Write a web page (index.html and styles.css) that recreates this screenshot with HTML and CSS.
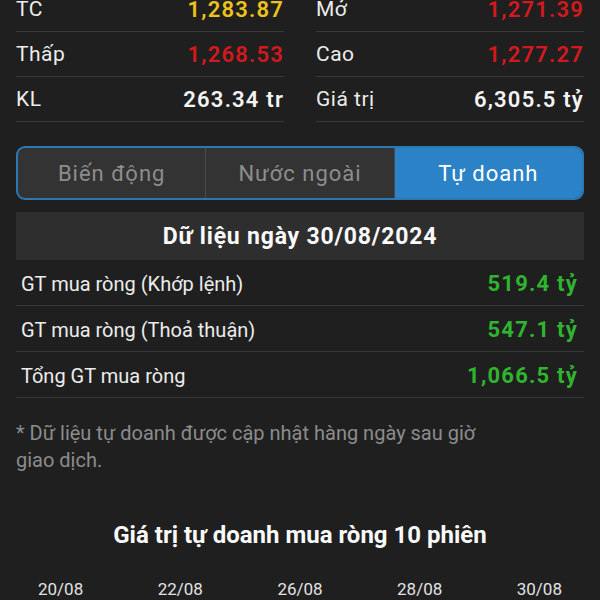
FILE: index.html
```html
<!DOCTYPE html>
<html lang="vi">
<head>
<meta charset="UTF-8">
<meta name="viewport" content="width=device-width, initial-scale=1.0">
<title>Tự doanh</title>
<link rel="stylesheet" href="styles.css">
</head>
<body>
<main class="page">
  <section class="summary">
    <div class="col">
      <div class="stat"><span>TC</span><b class="ref">1,283.87</b></div>
      <div class="stat"><span>Thấp</span><b class="down">1,268.53</b></div>
      <div class="stat"><span>KL</span><b class="plain">263.34 tr</b></div>
    </div>
    <div class="col">
      <div class="stat"><span>Mở</span><b class="down">1,271.39</b></div>
      <div class="stat"><span>Cao</span><b class="down">1,277.27</b></div>
      <div class="stat"><span>Giá trị</span><b class="plain">6,305.5 tỷ</b></div>
    </div>
  </section>

  <nav class="tabs">
    <div class="tab">Biến động</div>
    <div class="tab">Nước ngoài</div>
    <div class="tab active">Tự doanh</div>
  </nav>

  <div class="day">Dữ liệu ngày 30/08/2024</div>

  <section class="net">
    <div class="row"><span>GT mua ròng (Khớp lệnh)</span><b>519.4 tỷ</b></div>
    <div class="row"><span>GT mua ròng (Thoả thuận)</span><b>547.1 tỷ</b></div>
    <div class="row"><span>Tổng GT mua ròng</span><b>1,066.5 tỷ</b></div>
  </section>

  <p class="note">* Dữ liệu tự doanh được cập nhật hàng ngày sau giờ giao dịch.</p>

  <h3 class="chart-title">Giá trị tự doanh mua ròng 10 phiên</h3>
  <div class="axis">
    <span>20/08</span>
    <span>22/08</span>
    <span>26/08</span>
    <span>28/08</span>
    <span>30/08</span>
  </div>
</main>
</body>
</html>
```

FILE: styles.css
```css
html, body {
  margin: 0;
  background: #1f1f1f;
  color: #ececec;
  font-family: Roboto, "Noto Sans", sans-serif;
}
.page {
  padding: 0 16px;
  margin-top: -13px;
}
.summary {
  display: grid;
  grid-template-columns: 1fr 1fr;
  column-gap: 32px;
}
.stat {
  display: flex;
  justify-content: space-between;
  align-items: center;
  height: 44px;
  border-bottom: 1px solid #3a3a3a;
  font-size: 21px;
  letter-spacing: 0.5px;
}
.stat b {
  font-size: 22px;
  font-weight: 600;
  letter-spacing: 1.2px;
}
.ref { color: #ecc21b; }
.down { color: #d2191e; }
.plain { color: #f4f4f4; }

.tabs {
  display: flex;
  margin-top: 24px;
  height: 50px;
  border: 2px solid #2b78b3;
  border-radius: 9px;
  overflow: hidden;
  background: #333;
}
.tab {
  flex: 1;
  display: flex;
  align-items: center;
  justify-content: center;
  font-size: 22px;
  letter-spacing: 1px;
  color: #8d8d8d;
  border-right: 1px solid #4a4a4a;
}
.tab:last-child {
  border-right: 0;
}
.tab.active {
  background: #2c82c6;
  color: #fff;
}

.day {
  margin-top: 12px;
  height: 48px;
  background: #2e2e2e;
  display: flex;
  align-items: center;
  justify-content: center;
  font-size: 23px;
  font-weight: 700;
  letter-spacing: 0.8px;
  color: #fafafa;
}

.row {
  display: flex;
  justify-content: space-between;
  align-items: center;
  box-sizing: border-box;
  height: 46px;
  padding: 2px 6px 0 5px;
  border-bottom: 1px solid #383838;
  font-size: 20px;
}
.row b {
  color: #2fb42f;
  font-size: 22px;
  font-weight: 700;
  letter-spacing: 1.2px;
}

.note {
  margin: 22px 0 0;
  padding-right: 80px;
  font-size: 20px;
  line-height: 27px;
  color: #8c8c8c;
}

.chart-title {
  margin: 47px 0 0;
  text-align: center;
  font-size: 24px;
  font-weight: 700;
  color: #fafafa;
}
.axis {
  display: flex;
  justify-content: space-between;
  margin: 30px 22px 0 22px;
  font-size: 17px;
  color: #e2e2e2;
}
```
